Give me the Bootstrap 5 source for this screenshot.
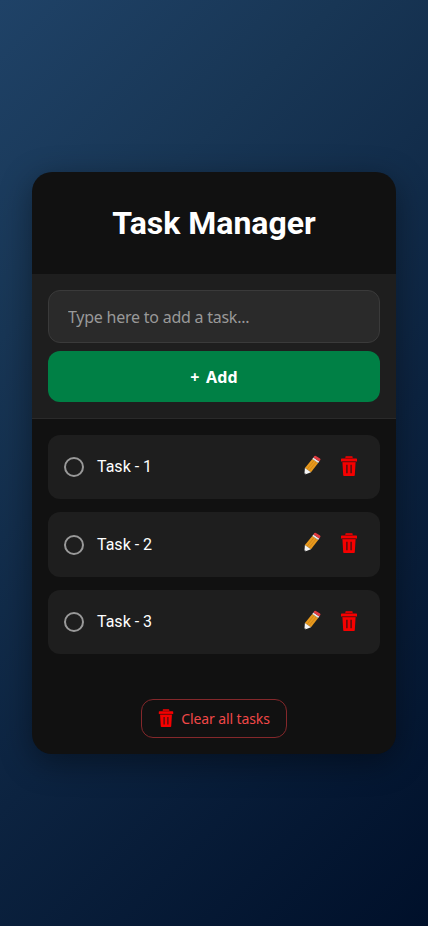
<!DOCTYPE html>
<html lang="en">
<head>
<meta charset="utf-8">
<meta name="viewport" content="width=device-width, initial-scale=1">
<title>Task Manager</title>
<link href="https://cdn.jsdelivr.net/npm/bootstrap@5.3.0/dist/css/bootstrap.min.css" rel="stylesheet">
<style>
body{font-family:Roboto,sans-serif;background:linear-gradient(135deg,#1f4267 0%,#183655 25%,#0c2340 60%,#00102a 100%);color:#fff}
.task-panel{background:#111;border-radius:20px;box-shadow:0 8px 32px rgba(0,0,0,.4)}
.panel-head{height:102px}
.panel-head h1{font-size:32px;line-height:38px}
.entry-area{background:#1e1e1e;border-bottom:1px solid #2a2a2a}
.ui-face{font-family:Tahoma,"Noto Sans",sans-serif}
.entry-area .form-control{height:53px;padding:1px 19px 0;background:#2a2a2a;border:1px solid #3a3a3a;border-radius:12px;color:#fff;font-size:16px;letter-spacing:-.24px}
.entry-area .form-control::placeholder{color:#999;opacity:1}
.btn-add{height:51px;background:#008045;border:0;border-radius:12px;font-size:16px;color:#fff;padding:1px 0 0;word-spacing:2px;letter-spacing:.15px}
.task-list{gap:13px}
.task-item{height:64.4px;background:#1e1e1e;border-radius:12px;padding:0 20px 0 16px}
.check-ring{width:20px;height:20px;border:2px solid #999;border-radius:50%;margin-right:13px}
.task-name{font-size:16px;line-height:24px;padding-top:.4px}
.pencil-icon{margin-bottom:4.6px}
.bin-icon{margin-left:17px;margin-bottom:2.6px}
.btn-clear{height:39px;width:146px;border:1px solid #84282b;border-radius:12px;color:#f04848;font-size:14px;margin-top:44.8px;gap:7px;padding:0}
.btn-clear span{letter-spacing:-.1px}
</style>
<script src="https://cdn.jsdelivr.net/npm/bootstrap@5.3.0/dist/js/bootstrap.bundle.min.js"></script>
</head>
<body class="min-vh-100 d-flex align-items-center justify-content-center px-4">
<svg class="d-none" xmlns="http://www.w3.org/2000/svg">
<symbol id="bin" viewBox="0 0 16 20">
<path fill="#f60000" d="M5 .2h6q.6 0 .6.600V2.500H15.300q.7 0 .7.700V5.500H0V3.200q0-.7.700-.7H4.400V.8Q4.400.2 5 .2zM1.400 6h13.200l-.8 13.200q-.1.700-.8.700H3q-.7 0-.8-.7z"/>
<path fill="none" stroke="#77090a" stroke-width=".9" d="M1 5.800h14M4.400 2.300h7.200"/>
<path fill="none" stroke="#4a1011" stroke-width="1.400" d="M5.900 8.800v8.400M10.100 8.800v8.400"/>
</symbol>
<symbol id="pencil" viewBox="0 0 18 20">
<path fill="#e8991d" d="M9.300 4 15.200 8 8 17.300 1.900 13z"/>
<path stroke="#bd7914" stroke-width=".6" d="m11.300 5.300-7.400 9.200M13.300 6.700l-7.500 9.300"/>
<path fill="#f4f4f4" d="M1.900 13 8 17.300l-5.300 2q-1.200.2-1.200-1z"/>
<path fill="#333" d="m1.500 17.900-.1 1.600 1.600-.4z"/>
<path fill="#e8e8e8" d="m9.300 4 1.100-1.500 5.900 4L15.200 8z"/>
<path fill="#e23b41" d="m10.400 2.500 1-1.400q.6-.8 1.500-.2L17 3.500q.9.600.3 1.500l-1 1.500z"/>
</symbol>
</svg>
<main class="task-panel w-100 mx-2 overflow-hidden">
<header class="panel-head d-flex align-items-center justify-content-center"><h1 class="fw-bold m-0">Task Manager</h1></header>
<section class="entry-area d-grid gap-2 p-3">
<input class="form-control ui-face shadow-none" type="text" placeholder="Type here to add a task...">
<button class="btn btn-add ui-face fw-bold w-100" type="button">+ Add</button>
</section>
<section class="p-3 d-flex flex-column">
<ul class="task-list list-unstyled d-flex flex-column m-0">
<li class="task-item d-flex align-items-center"><span class="check-ring"></span><span class="task-name">Task - 1</span><svg class="pencil-icon ms-auto" width="18" height="20"><use href="#pencil"/></svg><svg class="bin-icon" width="22" height="20"><use href="#bin"/></svg></li>
<li class="task-item d-flex align-items-center"><span class="check-ring"></span><span class="task-name">Task - 2</span><svg class="pencil-icon ms-auto" width="18" height="20"><use href="#pencil"/></svg><svg class="bin-icon" width="22" height="20"><use href="#bin"/></svg></li>
<li class="task-item d-flex align-items-center"><span class="check-ring"></span><span class="task-name">Task - 3</span><svg class="pencil-icon ms-auto" width="18" height="20"><use href="#pencil"/></svg><svg class="bin-icon" width="22" height="20"><use href="#bin"/></svg></li>
</ul>
<button class="btn btn-clear ui-face d-flex align-items-center justify-content-center align-self-center" type="button"><svg width="16" height="18"><use href="#bin"/></svg><span>Clear all tasks</span></button>
</section>
</main>
</body>
</html>
